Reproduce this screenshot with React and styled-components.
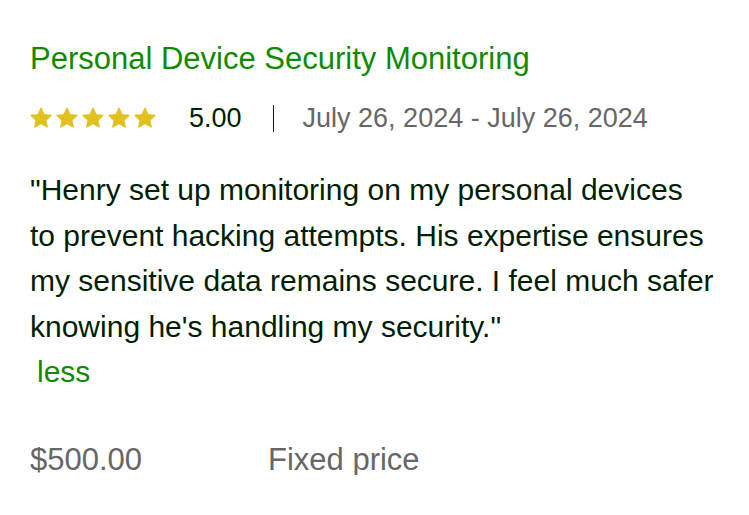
import styled, { createGlobalStyle } from 'styled-components';

const GlobalStyle = createGlobalStyle`
  body {
    margin: 0;
    background: #ffffff;
    font-family: "Liberation Sans", Arial, sans-serif;
  }
`;

const Card = styled.article`
  padding: 41px 30px 0;
  width: 689px;
`;

const Title = styled.h2`
  margin: 0;
  font-size: 31px;
  font-weight: 400;
  line-height: 36px;
  color: #108a00;
`;

const MetaRow = styled.div`
  display: flex;
  align-items: center;
  margin-top: 27px;
  height: 28px;
`;

const Stars = styled.div`
  display: flex;
  gap: 4px;
`;

const Rating = styled.span`
  margin-left: 33px;
  font-size: 27px;
  color: #001e00;
`;

const Divider = styled.span`
  width: 1px;
  height: 27px;
  margin: 0 29px 0 31px;
  background: #001e00;
`;

const Dates = styled.span`
  font-size: 27px;
  color: #676767;
`;

const Quote = styled.p`
  margin: 35px 0 0;
  max-width: 684px;
  font-size: 30px;
  line-height: 45.5px;
  color: #001e00;
`;

const LessLink = styled.a`
  display: inline-block;
  margin-left: 7px;
  color: #108a00;
  text-decoration: none;
`;

const PriceRow = styled.div`
  display: flex;
  margin-top: 50px;
  font-size: 31px;
  line-height: 30px;
  color: #676767;
`;

const Price = styled.span`
  width: 238px;
`;

const Star = () => (
  <svg width="22" height="22" viewBox="0 0 24 24">
    <path
      fill="#e2c11f"
      stroke="#e2c11f"
      strokeWidth="1.6"
      strokeLinejoin="round"
      d="M12 1.5l3.2 6.9 7.5.8-5.6 5.1 1.6 7.4L12 17.9l-6.7 3.8 1.6-7.4-5.6-5.1 7.5-.8z"
    />
  </svg>
);

export default function App() {
  return (
    <>
      <GlobalStyle />
      <Card>
        <Title>Personal Device Security Monitoring</Title>
        <MetaRow>
          <Stars>
            {[0, 1, 2, 3, 4].map((i) => (
              <Star key={i} />
            ))}
          </Stars>
          <Rating>5.00</Rating>
          <Divider />
          <Dates>July 26, 2024 - July 26, 2024</Dates>
        </MetaRow>
        <Quote>
          "Henry set up monitoring on my personal devices to prevent hacking
          attempts. His expertise ensures my sensitive data remains secure. I
          feel much safer knowing he's handling my security."
          <br />
          <LessLink href="#">less</LessLink>
        </Quote>
        <PriceRow>
          <Price>$500.00</Price>
          <span>Fixed price</span>
        </PriceRow>
      </Card>
    </>
  );
}
